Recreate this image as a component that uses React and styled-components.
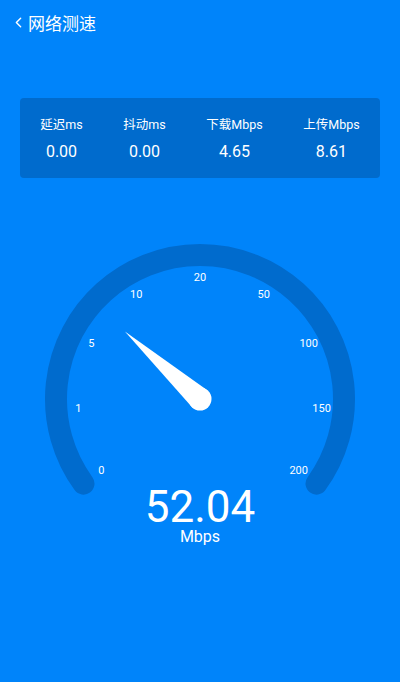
import styled, { createGlobalStyle } from "styled-components";
import { ChevronLeft } from "lucide-react";

const GlobalStyle = createGlobalStyle`
  body {
    margin: 0;
    background: #0084fa;
    font-family: Roboto, "Noto Sans CJK SC", sans-serif;
  }
`;

const Page = styled.div`
  width: 400px;
  min-height: 682px;
  background: #0084fa;
  color: #fff;
  overflow: hidden;
`;

const Header = styled.div`
  height: 44px;
  display: flex;
  align-items: center;
  padding-left: 10px;
  gap: 1px;
`;

const Title = styled.span`
  font-size: 17px;
  font-family: "Noto Sans CJK SC", sans-serif;
`;

const StatCard = styled.div`
  margin: 54px 20px 0;
  height: 80px;
  background: #006bcd;
  border-radius: 4px;
  display: flex;
  justify-content: space-around;
  align-items: center;
`;

const Stat = styled.div`
  display: flex;
  flex-direction: column;
  align-items: center;
  gap: 9px;
  padding-top: 2px;
`;

const StatLabel = styled.span`
  font-size: 12.5px;
  line-height: 16px;
  font-family: Roboto, "Noto Sans CJK SC", sans-serif;
`;

const StatValue = styled.span`
  font-size: 16px;
  line-height: 20px;
`;

const Gauge = styled.svg`
  display: block;
  margin-top: 54px;
`;

const Reading = styled.div`
  margin-top: -9px;
  text-align: center;
  font-size: 44px;
  line-height: 40px;
`;

const Unit = styled.div`
  margin-top: 1px;
  text-align: center;
  font-size: 16px;
  line-height: 18px;
`;

const stats = [
  { label: "延迟ms", value: "0.00" },
  { label: "抖动ms", value: "0.00" },
  { label: "下载Mbps", value: "4.65" },
  { label: "上传Mbps", value: "8.61" },
];

const ticks = ["0", "1", "5", "10", "20", "50", "100", "150", "200"];

const CX = 200;
const CY = 167;
const rad = (d) => (d * Math.PI) / 180;
const pt = (deg, r) => [CX + r * Math.cos(rad(deg)), CY + r * Math.sin(rad(deg))];

const SpeedGauge = ({ angle }) => {
  const [sx, sy] = pt(144, 144);
  const [ex, ey] = pt(36, 144);
  const [tx, ty] = pt(angle, 101);
  const [ax, ay] = pt(angle + 90, 11.5);
  const [bx, by] = pt(angle - 90, 11.5);
  return (
    <Gauge width="400" height="264" viewBox="0 0 400 264">
      <path
        d={`M ${sx} ${sy} A 144 144 0 1 1 ${ex} ${ey}`}
        fill="none"
        stroke="#006bcd"
        strokeWidth="22"
        strokeLinecap="round"
      />
      {ticks.map((t, i) => {
        const [x, y] = pt(144 + i * 31.5, 122);
        return (
          <text
            key={t}
            x={x}
            y={y}
            fill="#fff"
            fontSize="11"
            fontFamily="Roboto, sans-serif"
            textAnchor="middle"
            dominantBaseline="central"
          >
            {t}
          </text>
        );
      })}
      <polygon points={`${tx},${ty} ${ax},${ay} ${bx},${by}`} fill="#fff" />
      <circle cx={CX} cy={CY} r="11.5" fill="#fff" />
    </Gauge>
  );
};

const App = () => {
  return (
    <Page>
      <GlobalStyle />
      <Header>
        <ChevronLeft size={17} strokeWidth={2} />
        <Title>网络测速</Title>
      </Header>
      <StatCard>
        {stats.map((s) => (
          <Stat key={s.label}>
            <StatLabel>{s.label}</StatLabel>
            <StatValue>{s.value}</StatValue>
          </Stat>
        ))}
      </StatCard>
      <SpeedGauge angle={222} />
      <Reading>52.04</Reading>
      <Unit>Mbps</Unit>
    </Page>
  );
};

export default App;
